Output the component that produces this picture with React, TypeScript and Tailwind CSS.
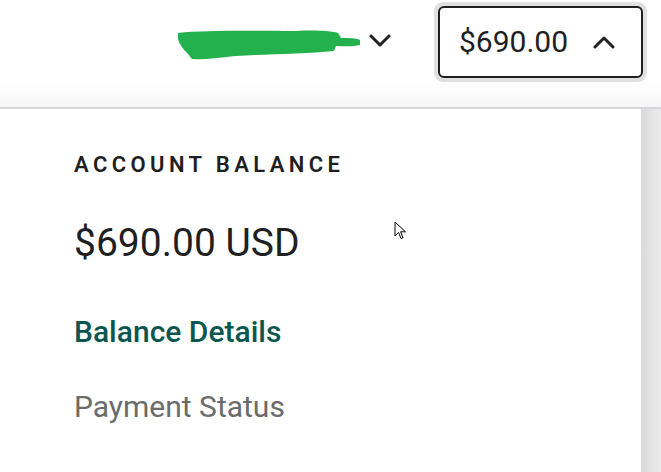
import React from "react";

// Little chevron used in the header
function Chevron({ up }: { up?: boolean }) {
  return (
    <svg width="22" height="14" viewBox="0 0 22 14" className="block">
      <path
        d={up ? "M2 12 L11 3 L20 12" : "M2 2 L11 11 L20 2"}
        fill="none"
        stroke="#222"
        strokeWidth="3"
        strokeLinecap="round"
        strokeLinejoin="round"
      />
    </svg>
  );
}

// Hand-drawn redaction over the account name
function Scribble() {
  return (
    <svg width="186" height="32" viewBox="0 0 186 32" className="block">
      <path
        d="M2 4 C30 1 80 2 120 2 C140 1 155 2 162 4 L165 9 C172 9 180 9 184 11 L184 16 C176 18 168 17 160 17 L158 22 C130 25 90 25 60 27 C40 29 25 31 16 30 L12 25 C7 20 3 15 2 10 Z"
        fill="#22b14c"
      />
    </svg>
  );
}

function Cursor() {
  return (
    <svg width="14" height="20" viewBox="0 0 14 20" className="absolute left-[394px] top-[221px]">
      <path
        d="M1 1 L1 15 L4.5 11.5 L7 17.5 L9 16.7 L6.6 10.8 L11.5 10.8 Z"
        fill="#fff"
        stroke="#000"
        strokeWidth="1"
        strokeLinejoin="round"
      />
    </svg>
  );
}

function App() {
  return (
    <div
      className="relative w-[661px] h-[472px] overflow-hidden bg-white"
      style={{ fontFamily: "Roboto, 'Liberation Sans', sans-serif" }}
    >
      {/* Top bar */}
      <div className="h-[107px] bg-gradient-to-b from-white from-75% to-[#f6f6f6] flex items-start justify-end pr-[14px]">
        <div className="flex items-start gap-[7px] mt-[29px] mr-[43px]">
          <Scribble />
          <div className="mt-[5px]">
            <Chevron />
          </div>
        </div>
        <div className="mt-[2px] rounded-[9px] bg-[#e0e0e0] p-[4px]">
          <button className="w-[205px] h-[72px] rounded-[6px] border-2 border-[#1f1f1f] bg-white flex items-center pl-[19px] pr-[26px] justify-between">
            <span className="text-[30px] text-[#1f1f1f] leading-none">$690.00</span>
            <Chevron up />
          </button>
        </div>
      </div>
      <div className="h-[2px] bg-[#d5d7da]" />

      {/* Dropdown panel */}
      <div className="flex h-[363px]">
        <div className="flex-1 bg-white pl-[74px] pt-[42px]">
          <div className="text-[22px] font-semibold tracking-[0.2em] text-[#1f1f1f] leading-[28px]">
            ACCOUNT BALANCE
          </div>
          <div className="mt-[42px] text-[39px] text-[#1f1f1f] leading-[44px]">$690.00 USD</div>
          <div className="mt-[50px] text-[30px] font-medium text-[#0b5750] leading-[34px]">
            Balance Details
          </div>
          <div className="mt-[41px] text-[30px] text-[#6b6b6b] leading-[34px]">Payment Status</div>
        </div>
        <div className="w-[20px] bg-gradient-to-r from-[#d9d9d9] to-[#ececec]" />
      </div>

      <Cursor />
    </div>
  );
}

export default App;
